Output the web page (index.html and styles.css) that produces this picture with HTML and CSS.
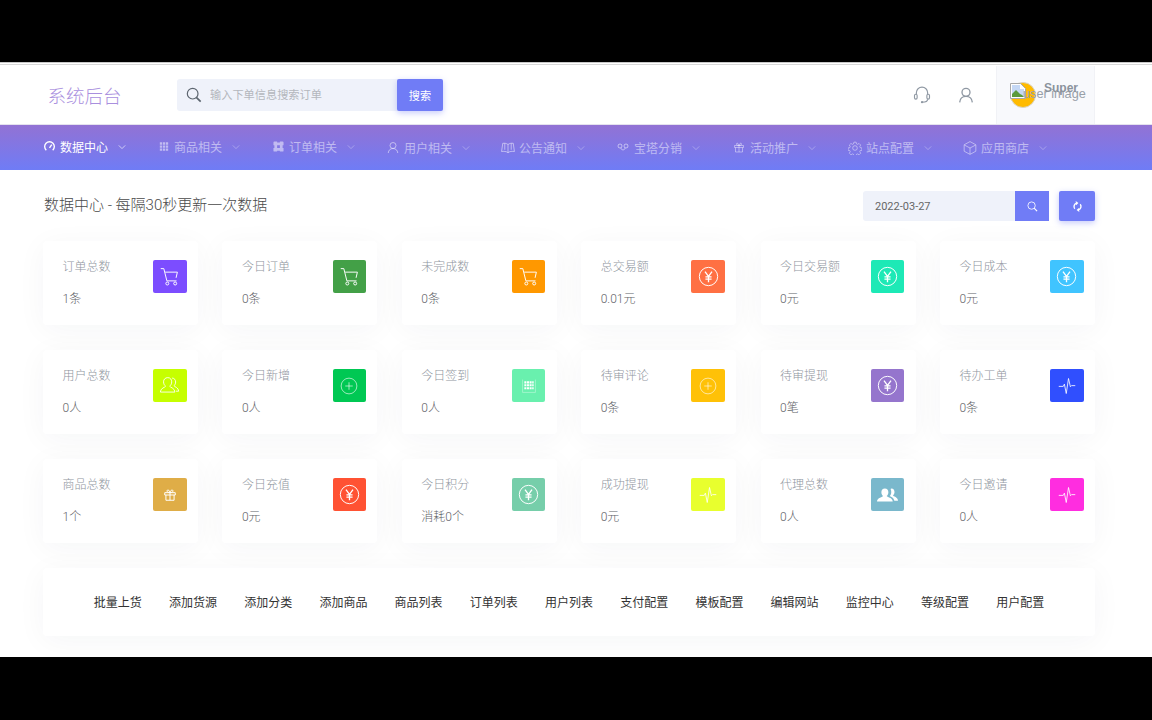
FILE: index.html
```html
<!DOCTYPE html>
<html lang="zh-CN">
<head>
  <meta charset="UTF-8" />
  <title>系统后台</title>
  <link rel="stylesheet" href="styles.css">
</head>

<body>
  <svg class="sprite" aria-hidden="true">
    <symbol id="i-cart" viewBox="0 0 24 24"><path d="M2 3h3.500L9 17h11M7 7h14l-1.500 6.500" fill="none" stroke="currentColor" stroke-width="1.100"/><circle cx="9.500" cy="20" r="1.700" fill="none" stroke="currentColor" stroke-width="1.100"/><circle cx="18.500" cy="20" r="1.700" fill="none" stroke="currentColor" stroke-width="1.100"/></symbol>
    <symbol id="i-yen" viewBox="0 0 24 24"><circle cx="12" cy="12" r="10.500" fill="none" stroke="currentColor" stroke-width="1.100"/><path d="M8 6.500l4 5.500 4-5.500M12 12v6.500M8.500 12.500h7M8.500 15h7" fill="none" stroke="currentColor" stroke-width="1.500"/></symbol>
    <symbol id="i-plus" viewBox="0 0 24 24"><circle cx="12" cy="12" r="10.500" fill="none" stroke="currentColor" stroke-width="1" opacity=".8"/><path d="M12 7v10M7 12h10" fill="none" stroke="currentColor" stroke-width="1" opacity=".8"/></symbol>
    <symbol id="i-users" viewBox="0 0 24 24"><path d="M10 3c3 0 4.500 2.200 4.500 4.800 0 2.200-1 4-2.300 5 .1 1.200 6 2.200 6 6.700H1.500c0-4.500 5.900-5.500 6-6.700-1.300-1-2.300-2.800-2.300-5C5.200 5.200 7 3 10 3zM15 3.500c2.800.2 4 2.300 4 4.500 0 1.800-.8 3.300-1.800 4.300.1 1.100 5.300 2 5.300 6.200h-3" fill="none" stroke="currentColor" stroke-width="1"/></symbol>
    <symbol id="i-users-fill" viewBox="0 0 24 24"><path d="M9 5c2.500 0 4 1.900 4 4.300 0 2-.9 3.500-2 4.400.1 1 7 2 7 6.300H0c0-4.300 6.900-5.300 7-6.300-1.100-.9-2-2.400-2-4.400C5 6.900 6.500 5 9 5z" fill="currentColor"/><path d="M16.500 5c2.300 0 3.500 1.800 3.500 4 0 1.800-.8 3.100-1.700 4 .1.900 5.700 1.800 5.700 6h-4.200c-.7-3-3.500-4.300-5.200-5.200 1.100-1.300 1.700-3 1.700-4.800 0-1.200-.3-2.400-.8-3.300.3-.4.600-.7 1-.7z" fill="currentColor"/></symbol>
    <symbol id="i-cal" viewBox="0 0 24 24"><path d="M1 1v22h22V1" fill="none" stroke="currentColor" stroke-width=".6"/><path d="M4 4h3.500v3.500H4zM8.500 4H12v3.500H8.500zM13 4h3.500v3.500H13zM17.500 4H20v3.500h-2.500zM4 9h3.500v3.500H4zM8.500 9H12v3.500H8.500zM13 9h3.500v3.500H13zM17.500 9H20v3.500h-2.500zM4 14h3.500v3.500H4zM8.500 14H12v3.500H8.500zM13 14h3.500v3.500H13zM17.500 14H20v3.500h-2.500z" fill="currentColor"/></symbol>
    <symbol id="i-pulse" viewBox="0 0 24 24"><path d="M1 12.500h6l1.500-3L11 22l3-20 2.500 11 1.500-1.500h5" fill="none" stroke="currentColor" stroke-width="1.100"/></symbol>
    <symbol id="i-gift" viewBox="0 0 24 24"><path d="M3 8h18v4H3zM5 12v9h14v-9M12 8v13M12 8C9 8 6.500 6.500 7 4.500S11 3 12 8zm0 0c3 0 5.500-1.500 5-3.500S13 3 12 8z" fill="none" stroke="currentColor" stroke-width="1.700"/></symbol>
    <symbol id="i-meter" viewBox="0 0 24 24"><path d="M5 20A10.500 10.500 0 1 1 19 20" fill="none" stroke="currentColor" stroke-width="3"/><path d="M12 15l5-7" fill="none" stroke="currentColor" stroke-width="3"/></symbol>
    <symbol id="i-grid" viewBox="0 0 24 24"><path d="M2 2h5.500v5.500H2zM9.300 2h5.500v5.500H9.300zM16.500 2H22v5.500h-5.500zM2 9.300h5.500v5.500H2zM9.300 9.300h5.500v5.500H9.300zM16.500 9.300H22v5.500h-5.500zM2 16.500h5.500V22H2zM9.300 16.500h5.500V22H9.300zM16.500 16.500H22V22h-5.500z" fill="currentColor"/></symbol>
    <symbol id="i-order" viewBox="0 0 24 24"><path fill-rule="evenodd" d="M3 1h6v2h6V1h6a2 2 0 0 1 2 2v6h-2v6h2v6a2 2 0 0 1-2 2h-6v-2H9v2H3a2 2 0 0 1-2-2v-6h2V9H1V3a2 2 0 0 1 2-2zm6 8v6h6V9z" fill="currentColor"/></symbol>
    <symbol id="i-user" viewBox="0 0 24 24"><circle cx="12" cy="8" r="6" fill="none" stroke="currentColor" stroke-width="2"/><path d="M2.500 23c.5-5.500 4-9 9.500-9s9 3.500 9.500 9" fill="none" stroke="currentColor" stroke-width="2"/></symbol>
    <symbol id="i-book" viewBox="0 0 24 24"><path d="M12 6c-2.500-2-6-2.500-9-2L1 18c3.500-.5 8-.5 11 2 3-2.500 7.500-2.500 11-2L21 4c-3-.5-6.500 0-9 2zM12 6v14M6.500 4v11M17.500 4v11" fill="none" stroke="currentColor" stroke-width="1.700"/></symbol>
    <symbol id="i-link" viewBox="0 0 24 24"><circle cx="6" cy="9" r="4" fill="none" stroke="currentColor" stroke-width="2"/><circle cx="18" cy="9" r="4" fill="none" stroke="currentColor" stroke-width="2"/><path d="M8 13c0 5 8 5 8 0" fill="none" stroke="currentColor" stroke-width="2"/></symbol>
    <symbol id="i-gear" viewBox="0 0 24 24"><circle cx="12" cy="12" r="4" fill="none" stroke="currentColor" stroke-width="1.500"/><path d="M10 1.500h4l.7 3.200 1.700.8 2.900-1.600 2.800 2.800-1.600 2.900.8 1.700 3.200.7v4l-3.200.7-.8 1.700 1.600 2.900-2.800 2.800-2.900-1.600-1.700.8-.7 3.200h-4l-.7-3.200-1.700-.8-2.900 1.600-2.800-2.800 1.600-2.900-.8-1.700-3.200-.7v-4l3.200-.7.800-1.700-1.600-2.900 2.800-2.800 2.900 1.600 1.700-.8z" transform="translate(.5 .5) scale(.96)" fill="none" stroke="currentColor" stroke-width="1.500"/></symbol>
    <symbol id="i-box" viewBox="0 0 24 24"><path d="M12 1l10 5.500v11L12 23 2 17.500v-11zM2.500 7l9.500 5 9.500-5M12 12v10.500" fill="none" stroke="currentColor" stroke-width="1.600"/></symbol>
    <symbol id="i-chev" viewBox="0 0 10 10"><path d="M1 3l4 4 4-4" fill="none" stroke="currentColor" stroke-width="1"/></symbol>
    <symbol id="i-search" viewBox="0 0 24 24"><circle cx="10" cy="10" r="8" fill="none" stroke="currentColor" stroke-width="1.800"/><path d="M15.500 15.500L22 22" fill="none" stroke="currentColor" stroke-width="2.600"/></symbol>
    <symbol id="i-sync" viewBox="0 0 24 24"><path d="M6 17a8 8 0 0 1 4-12.500M18 7a8 8 0 0 1-4 12.500" fill="none" stroke="currentColor" stroke-width="3"/><path d="M8 0l6 4.500-5 4.500zM16 24l-6-4.500 5-4.500z" fill="currentColor"/></symbol>
    <symbol id="i-headset" viewBox="0 0 24 24"><path d="M4.500 11V9a7.500 7.500 0 0 1 15 0v2M19.500 17.500c0 2.500-3 4-7 4" fill="none" stroke="currentColor" stroke-width="1.500"/><rect x="2" y="11" width="3.500" height="6.500" rx="1.700" fill="none" stroke="currentColor" stroke-width="1.500"/><rect x="18.500" y="11" width="3.500" height="6.500" rx="1.700" fill="none" stroke="currentColor" stroke-width="1.500"/><circle cx="12" cy="21.500" r="1.500" fill="currentColor"/></symbol>
  </svg>

  <div class="page">
    <!-- top bar -->
    <header class="topbar">
      <div class="logo">系统后台</div>
      <form class="search">
        <svg class="search-icon"><use href="#i-search"/></svg>
        <input class="search-input" type="text" placeholder="输入下单信息搜索订单">
        <button class="btn search-btn" type="button">搜索</button>
      </form>
      <div class="top-right">
        <svg class="top-icon headset"><use href="#i-headset"/></svg>
        <svg class="top-icon user"><use href="#i-user"/></svg>
        <div class="user-panel">
          <span class="avatar"></span>
          <svg class="broken-img" viewBox="0 0 16 16">
            <path d="M.5.5h10l5 5v10H.5z" fill="#fff" stroke="#a8a8a8"/>
            <path d="M2 2h8v4h4v8H2z" fill="#c5d8f5"/>
            <path d="M2 14v-3l4-4 4 4 2 1 2 2z" fill="#5b9a3c"/>
          </svg>
          <span class="alt-text">user image</span>
          <b class="user-name">Super</b>
        </div>
      </div>
    </header>

    <!-- main menu -->
    <nav class="menu">
      <a class="menu-item active"><svg class="w11"><use href="#i-meter"/></svg><span>数据中心</span><svg class="chev"><use href="#i-chev"/></svg></a>
      <a class="menu-item tight"><svg class="w10"><use href="#i-grid"/></svg><span>商品相关</span><svg class="chev"><use href="#i-chev"/></svg></a>
      <a class="menu-item tight"><svg class="w11"><use href="#i-order"/></svg><span>订单相关</span><svg class="chev"><use href="#i-chev"/></svg></a>
      <a class="menu-item tight low"><svg class="w12"><use href="#i-user"/></svg><span>用户相关</span><svg class="chev"><use href="#i-chev"/></svg></a>
      <a class="menu-item wide low"><svg class="w13"><use href="#i-book"/></svg><span>公告通知</span><svg class="chev"><use href="#i-chev"/></svg></a>
      <a class="menu-item wide low"><svg class="w12"><use href="#i-link"/></svg><span>宝塔分销</span><svg class="chev"><use href="#i-chev"/></svg></a>
      <a class="menu-item low"><svg class="w12"><use href="#i-gift"/></svg><span>活动推广</span><svg class="chev"><use href="#i-chev"/></svg></a>
      <a class="menu-item low"><svg class="w13"><use href="#i-gear"/></svg><span>站点配置</span><svg class="chev"><use href="#i-chev"/></svg></a>
      <a class="menu-item low"><svg class="w13"><use href="#i-box"/></svg><span>应用商店</span><svg class="chev"><use href="#i-chev"/></svg></a>
    </nav>

    <main class="content">
      <div class="title-row">
        <h1 class="page-title">数据中心 - 每隔30秒更新一次数据</h1>
        <div class="date-tools">
          <input class="date-input" type="text" value="2022-03-27">
          <button class="btn date-btn" type="button"><svg><use href="#i-search"/></svg></button>
          <button class="btn sync-btn" type="button"><svg><use href="#i-sync"/></svg></button>
        </div>
      </div>

      <!-- stat cards -->
      <div class="stats">
        <div class="card"><div class="card-text"><p class="card-label">订单总数</p><p class="card-value">1条</p></div><div class="card-icon c-violet"><svg class="big"><use href="#i-cart"/></svg></div></div>
        <div class="card"><div class="card-text"><p class="card-label">今日订单</p><p class="card-value">0条</p></div><div class="card-icon c-green"><svg class="big"><use href="#i-cart"/></svg></div></div>
        <div class="card"><div class="card-text"><p class="card-label">未完成数</p><p class="card-value">0条</p></div><div class="card-icon c-orange"><svg class="big"><use href="#i-cart"/></svg></div></div>
        <div class="card"><div class="card-text"><p class="card-label">总交易额</p><p class="card-value">0.01元</p></div><div class="card-icon c-coral"><svg class="big"><use href="#i-yen"/></svg></div></div>
        <div class="card"><div class="card-text"><p class="card-label">今日交易额</p><p class="card-value">0元</p></div><div class="card-icon c-teal"><svg class="big"><use href="#i-yen"/></svg></div></div>
        <div class="card"><div class="card-text"><p class="card-label">今日成本</p><p class="card-value">0元</p></div><div class="card-icon c-sky"><svg class="big"><use href="#i-yen"/></svg></div></div>

        <div class="card"><div class="card-text"><p class="card-label">用户总数</p><p class="card-value">0人</p></div><div class="card-icon c-lime"><svg class="big"><use href="#i-users"/></svg></div></div>
        <div class="card"><div class="card-text"><p class="card-label">今日新增</p><p class="card-value">0人</p></div><div class="card-icon c-emerald"><svg><use href="#i-plus"/></svg></div></div>
        <div class="card"><div class="card-text"><p class="card-label">今日签到</p><p class="card-value">0人</p></div><div class="card-icon c-mint"><svg class="small"><use href="#i-cal"/></svg></div></div>
        <div class="card"><div class="card-text"><p class="card-label">待审评论</p><p class="card-value">0条</p></div><div class="card-icon c-amber"><svg><use href="#i-plus"/></svg></div></div>
        <div class="card"><div class="card-text"><p class="card-label">待审提现</p><p class="card-value">0笔</p></div><div class="card-icon c-lilac"><svg class="big"><use href="#i-yen"/></svg></div></div>
        <div class="card"><div class="card-text"><p class="card-label">待办工单</p><p class="card-value">0条</p></div><div class="card-icon c-indigo"><svg><use href="#i-pulse"/></svg></div></div>

        <div class="card"><div class="card-text"><p class="card-label">商品总数</p><p class="card-value">1个</p></div><div class="card-icon c-gold"><svg class="small"><use href="#i-gift"/></svg></div></div>
        <div class="card"><div class="card-text"><p class="card-label">今日充值</p><p class="card-value">0元</p></div><div class="card-icon c-red"><svg class="big"><use href="#i-yen"/></svg></div></div>
        <div class="card"><div class="card-text"><p class="card-label">今日积分</p><p class="card-value">消耗0个</p></div><div class="card-icon c-seafoam"><svg class="big"><use href="#i-yen"/></svg></div></div>
        <div class="card"><div class="card-text"><p class="card-label">成功提现</p><p class="card-value">0元</p></div><div class="card-icon c-yellow"><svg><use href="#i-pulse"/></svg></div></div>
        <div class="card"><div class="card-text"><p class="card-label">代理总数</p><p class="card-value">0人</p></div><div class="card-icon c-steel"><svg class="big"><use href="#i-users-fill"/></svg></div></div>
        <div class="card"><div class="card-text"><p class="card-label">今日邀请</p><p class="card-value">0人</p></div><div class="card-icon c-pink"><svg><use href="#i-pulse"/></svg></div></div>
      </div>

      <!-- quick links -->
      <div class="quick-links">
        <a>批量上货</a><a>添加货源</a><a>添加分类</a><a>添加商品</a><a>商品列表</a><a>订单列表</a><a>用户列表</a><a>支付配置</a><a>模板配置</a><a>编辑网站</a><a>监控中心</a><a>等级配置</a><a>用户配置</a>
      </div>
    </main>
  </div>
</body>
</html>
```

FILE: styles.css
```css
* {
  box-sizing: border-box;
}

body {
  margin: 0;
  height: 720px;
  overflow: hidden;
  padding-top: 62px;
  background-color: #000;
  font-family: Roboto, "Noto Sans CJK SC", sans-serif;
  font-size: 12px;
}

.sprite {
  display: none;
}

.page {
  height: 595px;
  padding-top: 1px;
  background-color: #fff;
  border-top: 1px solid #c9c9c9;
  display: flex;
  flex-direction: column;
}

/* top bar */
.topbar {
  height: 61px;
  flex-shrink: 0;
  padding-top: 1px;
  border-top: 1px solid #d8d8d8;
  border-bottom: 1px solid #e4e2ee;
  display: flex;
  align-items: center;
  background-color: #fff;
}

.logo {
  width: 129.5px;
  margin-left: 47.5px;
  font-size: 18.5px;
  font-weight: 300;
  color: #a98fde;
}

.search {
  width: 266px;
  height: 32px;
  display: flex;
  align-items: center;
  background-color: #eff2fa;
  border-radius: 3px;
}

.search-icon {
  width: 16px;
  height: 16px;
  flex-shrink: 0;
  margin-left: 9px;
  color: #5d6670;
}

.search-input {
  width: 195px;
  height: 32px;
  padding: 0 0 0 8px;
  border: none;
  outline: none;
  background: transparent;
  font-family: inherit;
  font-size: 11.2px;
}

.search-input::placeholder {
  color: #b4b7bd;
}

.btn {
  border: none;
  padding: 0;
  color: #fff;
  background-color: #707cf6;
  border-radius: 2px;
  box-shadow: 0 2px 6px rgba(112, 124, 246, 0.4);
  font-family: inherit;
  display: flex;
  align-items: center;
  justify-content: center;
}

.search-btn {
  width: 46px;
  height: 32px;
  flex-shrink: 0;
  font-size: 11.2px;
}

.top-right {
  margin-left: auto;
  margin-right: 57px;
  height: 58px;
  display: flex;
  align-items: center;
  color: #8f98a3;
}

.top-icon {
  width: 18px;
  height: 18px;
}

.top-icon.headset {
  margin-right: 27px;
  margin-left: 1px;
}

.top-icon.user {
  width: 16px;
  margin-right: 22px;
}

.user-panel {
  position: relative;
  width: 99px;
  height: 58px;
  background-color: #f8f9fc;
  border-left: 1px solid #f1f2f6;
  border-right: 1px solid #f1f2f6;
}

.avatar {
  position: absolute;
  left: 13px;
  top: 16px;
  width: 26px;
  height: 26px;
  border-radius: 50%;
  background-color: #ffbb00;
  border: 1px solid #d9d4c4;
}

.broken-img {
  position: absolute;
  left: 13px;
  top: 17px;
  width: 16px;
  height: 16px;
}

.alt-text {
  position: absolute;
  left: 26px;
  top: 21px;
  font-family: "Liberation Sans", sans-serif;
  font-size: 12.7px;
  color: #98a0a8;
  white-space: nowrap;
}

.user-name {
  position: absolute;
  left: 47px;
  top: 15px;
  font-family: "Liberation Sans", sans-serif;
  font-size: 12px;
  color: #8b939c;
}

/* menu */
.menu {
  height: 45px;
  flex-shrink: 0;
  padding: 0 0 2px 44px;
  display: flex;
  align-items: center;
  background: linear-gradient(180deg, #9272d4, #6f7cf6);
}

.menu-item {
  width: 115px;
  display: flex;
  align-items: center;
  gap: 5px;
  color: rgba(255, 255, 255, 0.5);
}

.menu-item.tight {
  width: 114px;
}

.menu-item.wide {
  width: 116px;
}

.menu-item.low {
  padding-top: 2px;
}

.menu-item.active {
  color: #fff;
}

.menu-item svg {
  height: 13px;
}

.w10 { width: 10px; }
.w11 { width: 11px; }
.w12 { width: 12px; }

.menu-item .w13 {
  width: 14px;
  height: 14px;
  margin-right: -1px;
}

.menu-item .chev {
  width: 8px;
  height: 8px;
  margin-left: 5px;
  opacity: 0.8;
}

/* content */
.content {
  flex: 1;
  padding: 21px 57px 0 43px;
  background-color: #fff;
}

.title-row {
  height: 30px;
  display: flex;
  align-items: center;
  justify-content: space-between;
}

.page-title {
  margin: 0 0 5px 1px;
  font-size: 15px;
  font-weight: 300;
  color: #4a4a4a;
}

.date-tools {
  display: flex;
}

.date-input {
  width: 152px;
  height: 30px;
  padding: 0 0 0 12px;
  border: none;
  outline: none;
  border-radius: 3px 0 0 3px;
  background-color: #eff2fa;
  font-family: inherit;
  font-size: 11px;
  color: #666;
}

.date-btn,
.sync-btn {
  height: 30px;
}

.date-btn {
  width: 34px;
  box-shadow: none;
  border-radius: 0;
}

.sync-btn {
  width: 36px;
  margin-left: 10px;
}

.date-btn svg,
.sync-btn svg {
  width: 11px;
  height: 11px;
}

.stats {
  margin-top: 20px;
  display: grid;
  grid-template-columns: repeat(6, 155px);
  column-gap: 24.4px;
  row-gap: 25px;
}

.card {
  height: 84px;
  padding: 19px 11.3px 0 19.5px;
  display: flex;
  justify-content: space-between;
  background-color: #fff;
  border-radius: 4px;
  box-shadow: 0 5px 30px rgba(30, 40, 80, 0.045);
}

.card p {
  margin: 0;
  line-height: 14px;
}

.card-label {
  color: #8f969e;
  font-weight: 300;
}

.card-value {
  margin-top: 18px !important;
  color: #5f6368;
  font-weight: 300;
}

.card-icon {
  width: 33.5px;
  height: 33px;
  border-radius: 2px;
  display: flex;
  align-items: center;
  justify-content: center;
  color: #fff;
}

.card-icon svg {
  width: 18px;
  height: 18px;
}

.card-icon svg.big {
  width: 21px;
  height: 21px;
}

.card-icon svg.small {
  width: 14px;
  height: 14px;
}

.c-violet { background-color: #7c4dff; }
.c-green { background-color: #43a047; }
.c-orange { background-color: #ff9800; }
.c-coral { background-color: #ff7043; }
.c-teal { background-color: #1de9b6; }
.c-sky { background-color: #40c4ff; }
.c-lime { background-color: #c6ff00; }
.c-emerald { background-color: #00c853; }
.c-mint { background-color: #69f0ae; }
.c-amber { background-color: #ffc107; }
.c-lilac { background-color: #9575cd; }
.c-indigo { background-color: #304ffe; }
.c-gold { background-color: #dfad47; }
.c-red { background-color: #ff5233; }
.c-seafoam { background-color: #76ceaa; }
.c-yellow { background-color: #e8ff2e; }
.c-steel { background-color: #7ab8cc; }
.c-pink { background-color: #ff2de0; }

.quick-links {
  height: 68px;
  margin-top: 25px;
  padding-bottom: 2px;
  display: flex;
  align-items: center;
  justify-content: center;
  gap: 27.2px;
  background-color: #fff;
  border-radius: 4px;
  box-shadow: 0 5px 30px rgba(30, 40, 80, 0.045);
  color: #333;
}
```
